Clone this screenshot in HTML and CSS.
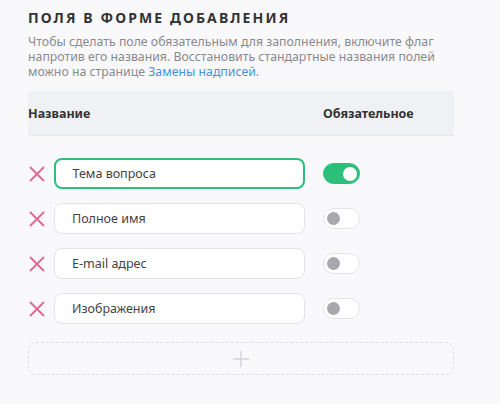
FILE: index.html
```html
<!DOCTYPE html>
<html lang="ru">
<head>
<meta charset="utf-8">
<link rel="stylesheet" href="styles.css">
</head>
<body>
<section class="panel">
  <h2 class="title">Поля в форме добавления</h2>
  <p class="desc">Чтобы сделать поле обязательным для заполнения, включите флаг напротив его названия. Восстановить стандартные названия полей можно на странице <a href="#" class="link">Замены надписей</a>.</p>
  <div class="thead">
    <span class="th-name">Название</span>
    <span class="th-req">Обязательное</span>
  </div>
  <div class="rows">
    <div class="row">
      <button class="del" aria-label="Удалить"><svg width="16" height="16" viewBox="0 0 16 16"><path d="M1 1L15 15M15 1L1 15" stroke="#e0678e" stroke-width="1.8" fill="none"/></svg></button>
      <div class="field active">Тема вопроса</div>
      <span class="toggle on"><span class="knob"></span></span>
    </div>
    <div class="row">
      <button class="del" aria-label="Удалить"><svg width="16" height="16" viewBox="0 0 16 16"><path d="M1 1L15 15M15 1L1 15" stroke="#e0678e" stroke-width="1.8" fill="none"/></svg></button>
      <div class="field">Полное имя</div>
      <span class="toggle"><span class="knob"></span></span>
    </div>
    <div class="row">
      <button class="del" aria-label="Удалить"><svg width="16" height="16" viewBox="0 0 16 16"><path d="M1 1L15 15M15 1L1 15" stroke="#e0678e" stroke-width="1.8" fill="none"/></svg></button>
      <div class="field">E-mail адрес</div>
      <span class="toggle"><span class="knob"></span></span>
    </div>
    <div class="row">
      <button class="del" aria-label="Удалить"><svg width="16" height="16" viewBox="0 0 16 16"><path d="M1 1L15 15M15 1L1 15" stroke="#e0678e" stroke-width="1.8" fill="none"/></svg></button>
      <div class="field">Изображения</div>
      <span class="toggle"><span class="knob"></span></span>
    </div>
  </div>
  <div class="add"><svg width="18" height="18" viewBox="0 0 18 18"><path d="M9 1V17M1 9H17" stroke="#cfd0d6" stroke-width="1.3" fill="none"/></svg></div>
</section>
</body>
</html>
```

FILE: styles.css
```css
html, body {
  margin: 0;
  padding: 0;
  background: #f9f9fb;
}
body {
  font-family: "Noto Sans", "Open Sans", sans-serif;
  color: #333;
}
.panel {
  width: 426px;
  padding: 9px 0 0 28px;
}
.title {
  margin: 0;
  font-size: 14px;
  line-height: 18px;
  font-weight: 700;
  letter-spacing: 2.1px;
  text-transform: uppercase;
  color: #333;
}
.desc {
  margin: 7px 0 0;
  font-size: 12.3px;
  line-height: 15px;
  color: #8a8a8e;
}
.link {
  color: #4a90e2;
  text-decoration: none;
}
.thead {
  margin-top: 12px;
  height: 44px;
  background: #f0f1f4;
  border-bottom: 1px solid #e6e7eb;
  display: flex;
  align-items: center;
}
.th-name, .th-req {
  font-size: 12.5px;
  font-weight: 700;
  color: #333;
}
.th-name { width: 295px; }
.rows {
  margin-top: 22px;
  display: flex;
  flex-direction: column;
  gap: 14px;
}
.row {
  display: flex;
  align-items: center;
  height: 31px;
}
.del {
  width: 16px;
  height: 16px;
  padding: 0;
  margin: 0 0 0 1px;
  border: 0;
  background: none;
  display: flex;
}
.field {
  margin-left: 9px;
  width: 251px;
  height: 31px;
  box-sizing: border-box;
  border: 1.5px solid #e4e4e8;
  border-radius: 8px;
  background: #fff;
  padding-left: 17px;
  display: flex;
  align-items: center;
  font-size: 12.5px;
  color: #444;
}
.field.active {
  border: 2px solid #2bbf7a;
  padding-left: 16.5px;
}
.toggle {
  margin-left: 18px;
  width: 37px;
  height: 21px;
  box-sizing: border-box;
  border-radius: 11px;
  border: 1.5px solid #e4e4e8;
  background: #fff;
  display: flex;
  align-items: center;
  padding-left: 3px;
}
.toggle .knob {
  width: 13px;
  height: 13px;
  border-radius: 50%;
  background: #a7a7ac;
}
.toggle.on {
  background: #2bbf7a;
  border-color: #2bbf7a;
  justify-content: flex-end;
  padding: 0 2.5px 0 0;
}
.toggle.on .knob {
  width: 14px;
  height: 14px;
  background: #fff;
}
.add {
  margin-top: 18px;
  height: 33px;
  box-sizing: border-box;
  border: 1.5px dashed #dcdde2;
  border-radius: 8px;
  display: flex;
  align-items: center;
  justify-content: center;
}
```
